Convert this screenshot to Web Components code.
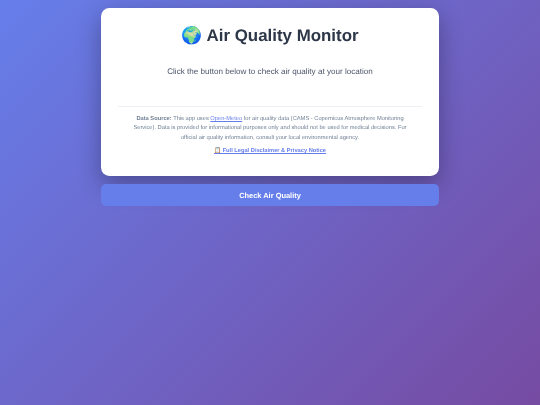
<!DOCTYPE html>
<html>
<head>
<meta charset="utf-8">
<title>Air Quality Monitor</title>
<style>
html,body{margin:0;height:100%}
body{
  width:540px;height:405px;overflow:hidden;
  background:linear-gradient(135deg,#667eea 0%,#764ba2 100%);
  font-family:"Liberation Sans",Arial,sans-serif;
  text-rendering:geometricPrecision;
  display:flex;justify-content:center;
}
</style>
</head>
<body>
<aq-app>
  <aq-card>
    <span slot="title">🌍 Air Quality Monitor</span>
    <span slot="lead">Click the button below to check air quality at your location</span>
    <aq-disclaimer></aq-disclaimer>
  </aq-card>
  <aq-button>Check Air Quality</aq-button>
</aq-app>
<script>
window.customElements.define('aq-app',
class extends HTMLElement {
  constructor(){super();
    this.attachShadow({mode:'open'});
    this.shadowRoot.innerHTML = `
    <style>
    :host{
      display:flex;
      flex-direction:column;
      gap:8.2px;
      width:337.5px;
      padding-top:8.45px;
      filter:blur(.3px);
    }
    </style>
    <slot></slot>`;
  }
});

window.customElements.define('aq-card',
class extends HTMLElement {
  constructor(){super();
    this.attachShadow({mode:'open'});
    this.shadowRoot.innerHTML = `
    <style>
    :host{
      display:block;
      box-sizing:border-box;
      padding:17.4px 16.9px 19.6px;
      background:#fff;
      border-radius:8.4px;
      box-shadow:0 8.4px 25px rgba(0,0,0,.3);
      text-align:center;
    }
    h1{
      margin:0;
      font-size:16.9px;
      line-height:19.4px;
      font-weight:700;
      color:#2d3748;
    }
    p{
      margin:19.7px 0 0;
      font-size:8.1px;
      line-height:13px;
      color:#4a5568;
    }
    </style>
    <h1><slot name="title"></slot></h1>
    <p><slot name="lead"></slot></p>
    <slot></slot>`;
  }
});

window.customElements.define('aq-disclaimer',
class extends HTMLElement {
  constructor(){super();
    this.attachShadow({mode:'open'});
    this.shadowRoot.innerHTML = `
    <style>
    :host{
      display:block;
      margin-top:28px;
      padding:7.9px 8px 0;
      border-top:1px solid #edf0f5;
      font-size:5.72px;
      line-height:9.6px;
      color:#718096;
    }
    a{color:#667eea}
    p{margin:0}
    .legal{margin-top:3.4px;font-size:5.7px;font-weight:700}
    </style>
    <p><strong>Data Source:</strong> This app uses <a href="#">Open-Meteo</a> for air quality data (CAMS - Copernicus Atmosphere Monitoring Service). Data is provided for informational purposes only and should not be used for medical decisions. For official air quality information, consult your local environmental agency.</p>
    <p class="legal"><a href="#">📋 Full Legal Disclaimer &amp; Privacy Notice</a></p>`;
  }
});

window.customElements.define('aq-button',
class extends HTMLElement {
  constructor(){super();
    this.attachShadow({mode:'open'});
    this.shadowRoot.innerHTML = `
    <style>
    :host{display:block}
    button{
      display:block;
      width:100%;
      height:22px;
      padding:0;
      border:none;
      border-radius:5px;
      background:#667eea;
      color:#fff;
      font:700 7.45px "Liberation Sans",Arial,sans-serif;
      text-rendering:geometricPrecision;
      cursor:pointer;
    }
    </style>
    <button><slot></slot></button>`;
  }
});
</script>
</body>
</html>
